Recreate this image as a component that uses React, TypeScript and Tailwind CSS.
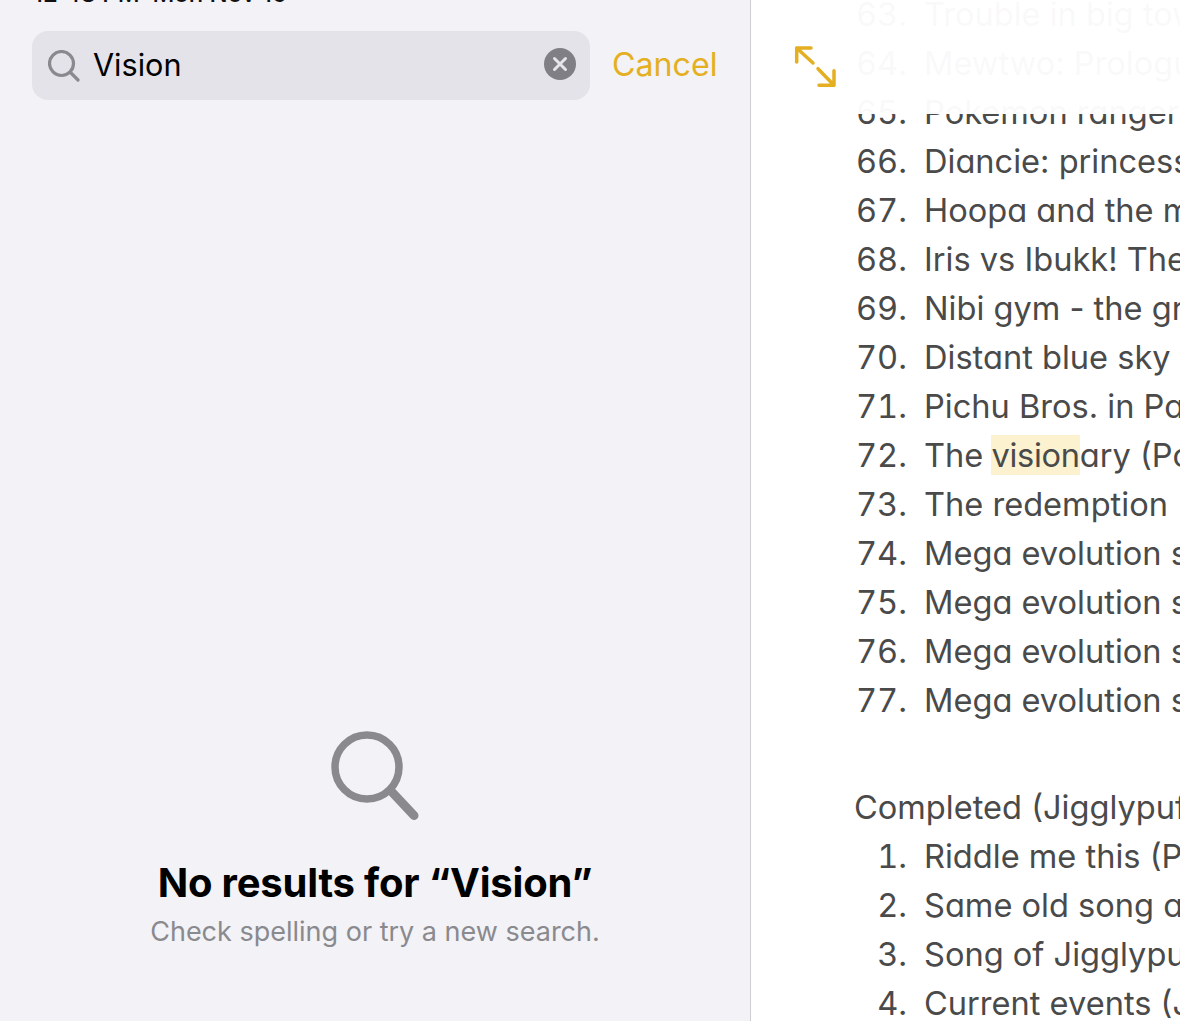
const rowsA: [string, string][] = [
  ["63.", "Trouble in big town"],
  ["64.", "Mewtwo: Prologue to awakening"],
  ["65.", "Pokemon ranger"],
  ["66.", "Diancie: princess of the diamond"],
  ["67.", "Hoopa and the mythical"],
  ["68.", "Iris vs Ibukk! The road"],
  ["69.", "Nibi gym - the great"],
  ["70.", "Distant blue sky"],
  ["71.", "Pichu Bros. in Party"],
  ["72.", "The |vision|ary (Pokemon)"],
  ["73.", "The redemption"],
  ["74.", "Mega evolution special 1"],
  ["75.", "Mega evolution special 2"],
  ["76.", "Mega evolution special 3"],
  ["77.", "Mega evolution special 4"],
];

const rowsB: [string, string][] = [
  ["1.", "Riddle me this (Pokemon)"],
  ["2.", "Same old song and dance"],
  ["3.", "Song of Jigglypuff"],
  ["4.", "Current events (Jigglypuff)"],
];

function Row({ n, t }: { n: string; t: string }) {
  const parts = t.split("|");
  return (
    <div className="flex h-[49px] items-center whitespace-nowrap">
      <span className="w-[156px] shrink-0 text-right tabular-nums">{n}</span>
      <span className="ml-[17px]">
        {parts.length === 3 ? (
          <>
            {parts[0]}
            <span className="-ml-[1px] bg-[#fcf2cf] tracking-[-0.3px]">{parts[1]}</span>
            {parts[2]}
          </>
        ) : (
          t
        )}
      </span>
    </div>
  );
}

export default function App() {
  return (
    <div className="flex h-[1021px] w-[1180px] overflow-hidden bg-white font-['Inter','Liberation_Sans',sans-serif] antialiased">
      <aside className="relative flex h-full w-[751px] shrink-0 flex-col border-r border-[#cfcfd2] bg-[#f2f2f7]">
        <div className="absolute left-[33px] top-[-18px] whitespace-nowrap text-[24px] font-medium leading-[24px] text-[#111]">
          12:48 PM&nbsp;&nbsp;Mon Nov 15
        </div>
        <div className="ml-[32px] mt-[31px] flex items-center">
          <div className="flex h-[69px] w-[558px] items-center rounded-[16px] bg-[#e3e3e9] pl-[16px] pr-[14px]">
            <svg width="32" height="32" viewBox="0 0 32 32" fill="none" stroke="#8a8a8e" strokeWidth="3.2" strokeLinecap="round">
              <circle cx="13.5" cy="13.5" r="12" />
              <path d="M22.5 22.5 L30 30" />
            </svg>
            <span className="ml-[13px] flex-1 text-[30.6px] leading-none text-black">Vision</span>
            <svg className="-mt-[3px]" width="32" height="32" viewBox="0 0 32 32">
              <circle cx="16" cy="16" r="16" fill="#7f7f85" />
              <path d="M10.5 10.5 L21.5 21.5 M21.5 10.5 L10.5 21.5" stroke="#e6e6ea" strokeWidth="3" strokeLinecap="round" />
            </svg>
          </div>
          <span className="ml-[22px] text-[32.2px] leading-none text-[#e4af20]">Cancel</span>
        </div>
        <div className="mt-[631px] flex flex-col items-center">
          <svg className="ml-[2px]" width="90" height="90" viewBox="0 0 90 90" fill="none" stroke="#8a8a8e" strokeLinecap="round">
            <circle cx="36" cy="36" r="32" strokeWidth="7.5" />
            <path d="M60 60 L83 84.5" strokeWidth="9" />
          </svg>
          <div className="mt-[38px] text-[40px] font-bold leading-[48px] tracking-[-0.2px] text-black">No results for “Vision”</div>
          <div className="mt-[8px] text-[27px] leading-[34px] text-[#8a8a8e]">Check spelling or try a new search.</div>
        </div>
      </aside>
      <main className="relative flex-1 overflow-hidden text-[32.6px] text-[#4a4a4a] [font-feature-settings:'cv11']">
        <div className="mt-[-10px]">
          {rowsA.map(([n, t]) => (
            <Row key={n} n={n} t={t} />
          ))}
          <div className="ml-[103px] mt-[58px] h-[49px] whitespace-nowrap leading-[49px]">Completed (Jigglypuff)</div>
          <div>
            {rowsB.map(([n, t]) => (
              <Row key={n} n={n} t={t} />
            ))}
          </div>
        </div>
        <div className="absolute inset-x-0 top-0 h-[114px] bg-white/[0.97]" />
        <svg className="absolute left-[39px] top-[40px]" width="50" height="50" viewBox="0 0 50 50" fill="none" stroke="#e4af20" strokeWidth="3.5" strokeLinecap="round" strokeLinejoin="round">
          <path d="M21 8 H6.7 V22 M6.7 8 L23 23" />
          <path d="M29 45.3 H44 V30.7 M44 45.3 L28 28.7" />
        </svg>
      </main>
    </div>
  );
}
